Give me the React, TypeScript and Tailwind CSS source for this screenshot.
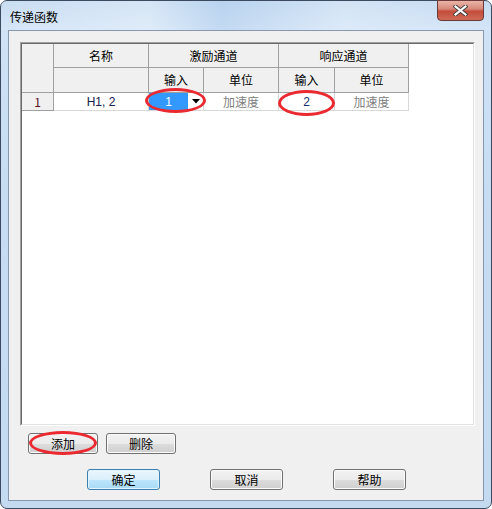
const headCell = "flex items-center justify-center border-r border-b border-[#a0a0a0] bg-[#f0f0f0]";
const dataCell = "flex items-center justify-center border-r border-b border-[#d8d8d8] bg-white";

function Btn({ label, primary = false, w = "w-[70px]" }: { label: string; primary?: boolean; w?: string }) {
  return (
    <div
      className={`${w} flex h-[21px] items-center justify-center rounded-[3px] border ${
        primary
          ? "border-[#3c7fb1] bg-[linear-gradient(180deg,#eaf6fd_0%,#d9f0fc_50%,#bee6fd_51%,#a7d9f5_100%)] shadow-[inset_0_0_0_1px_#e3f4fc]"
          : "border-[#707070] bg-[linear-gradient(180deg,#f2f2f2_0%,#ebebeb_50%,#dddddd_51%,#cfcfcf_100%)] shadow-[inset_0_0_0_1px_#fcfcfc]"
      }`}
    >
      <span className="leading-none">{label}</span>
    </div>
  );
}

export default function App() {
  return (
    <div className="relative h-[509px] w-[492px] overflow-hidden bg-white font-['Noto_Sans_CJK_SC',sans-serif] text-[12px] text-black">
      <div className="flex h-full w-full flex-col rounded-[7px] border border-[#3b4a5e] bg-[linear-gradient(180deg,#bfd7f0_0%,#cfe2f6_6%,#c7dcf2_40%,#c4daf1_100%)]">
        {/* title bar */}
        <div className="relative flex h-[29px] shrink-0 items-center pl-[9px] pt-[2px] bg-[linear-gradient(90deg,rgba(255,255,255,0.15)_0%,rgba(255,255,255,0.35)_30%,rgba(170,200,235,0.3)_45%,rgba(255,255,255,0.3)_70%,rgba(255,255,255,0.1)_100%)]">
          <span className="leading-none">传递函数</span>
          <div className="absolute right-[7px] top-[-1px] flex h-[21px] w-[47px] items-center justify-center rounded-b-[4px] border border-[#6b3a38] bg-[linear-gradient(180deg,#e9b4a8_0%,#d88b7c_40%,#c44d3c_55%,#cf6a57_100%)]">
            <svg width="15" height="11" viewBox="0 0 15 11">
              <path d="M2.5 1.5 L12.5 9.5 M12.5 1.5 L2.5 9.5" stroke="#3c3c3c" strokeWidth="4" strokeLinecap="square" />
              <path d="M2.5 1.5 L12.5 9.5 M12.5 1.5 L2.5 9.5" stroke="#ffffff" strokeWidth="2.2" strokeLinecap="square" />
            </svg>
          </div>
        </div>

        {/* client area */}
        <div className="mx-[7px] mb-[7px] flex flex-1 flex-col border border-[#8797ad] bg-[#f0f0f0]">
          <div className="ml-[11px] mr-[8px] mt-[11px] h-[384px] border border-t-[#a0a0a0] border-l-[#a0a0a0] border-r-white border-b-white">
            <div className="h-full border border-t-[#696969] border-l-[#696969] border-r-[#e3e3e3] border-b-[#e3e3e3] bg-white">
              <div className="grid w-[387px] grid-cols-[32px_95px_55px_75px_56px_74px] grid-rows-[24px_25px_18px]">
                <div className={`${headCell} row-span-2`} />
                <div className={headCell}>名称</div>
                <div className={`${headCell} col-span-2`}>激励通道</div>
                <div className={`${headCell} col-span-2`}>响应通道</div>
                <div className={headCell} />
                <div className={headCell}>输入</div>
                <div className={headCell}>单位</div>
                <div className={headCell}>输入</div>
                <div className={headCell}>单位</div>

                <div className={`${headCell} text-[#5a1020]`}>1</div>
                <div className={`${dataCell} font-['Liberation_Sans',sans-serif] text-[#14204a]`}>H1, 2</div>
                <div className="flex border-r border-b border-[#d8d8d8] bg-white">
                  <div className="flex w-[39px] items-center justify-center bg-[#3399ff] font-['Liberation_Sans',sans-serif] text-white">1</div>
                  <div className="flex flex-1 items-center justify-center">
                    <svg width="8" height="5" viewBox="0 0 8 5">
                      <path d="M0 0 H8 L4 4.5 Z" fill="#000" />
                    </svg>
                  </div>
                </div>
                <div className={`${dataCell} text-[#808080]`}>加速度</div>
                <div className={`${dataCell} font-['Liberation_Sans',sans-serif] text-[#14306a]`}>2</div>
                <div className={`${dataCell} text-[#808080]`}>加速度</div>
              </div>
            </div>
          </div>

          <div className="ml-[19px] mt-[7px] flex gap-[8px]">
            <Btn label="添加" />
            <Btn label="删除" />
          </div>
          <div className="ml-[78px] mt-[15px] flex gap-[50px]">
            <Btn label="确定" primary w="w-[73px]" />
            <Btn label="取消" w="w-[73px]" />
            <Btn label="帮助" w="w-[73px]" />
          </div>
        </div>
      </div>

      {/* red annotation ellipses */}
      <div className="pointer-events-none absolute left-[145px] top-[88px] h-[25px] w-[61px] rounded-[50%] border-[3px] border-[#ea2a30]" />
      <div className="pointer-events-none absolute left-[278px] top-[90px] h-[26px] w-[57px] rounded-[50%] border-[3px] border-[#ea2a30]" />
      <div className="pointer-events-none absolute left-[29px] top-[431px] h-[24px] w-[68px] rounded-[50%] border-[3px] border-[#ea2a30]" />
    </div>
  );
}
